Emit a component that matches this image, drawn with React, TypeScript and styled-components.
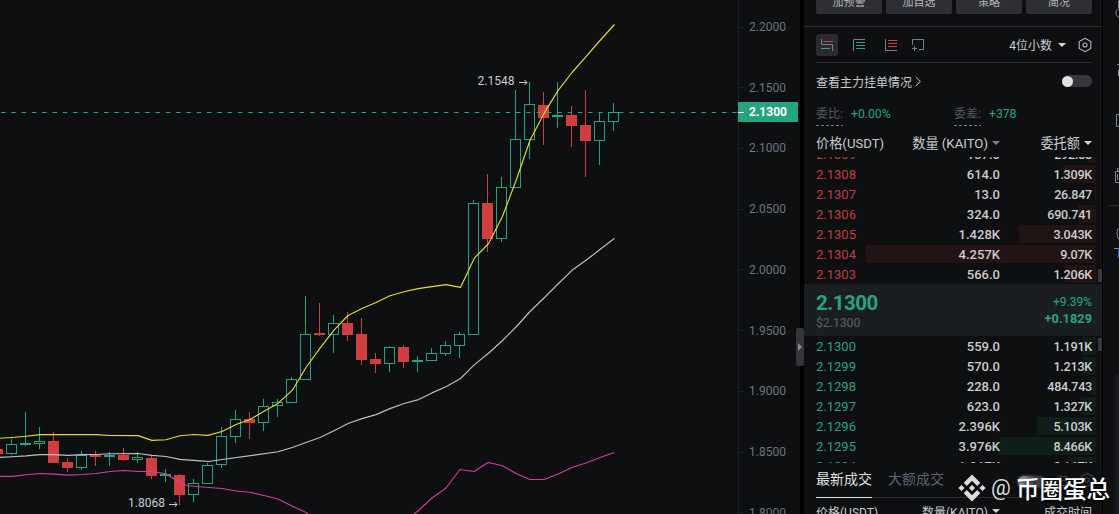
import React from "react";
import styled, { createGlobalStyle } from "styled-components";

const C = {
  bg: "#0d0f11",
  green: "#26a480",
  red: "#cf3f40",
  text: "#cbccd0",
  muted: "#70727f",
  faint: "#55575f",
  line: "#2c2d30",
  tile: "#2e2f34",
};

const Global = createGlobalStyle`
  * { box-sizing: border-box; }
  body {
    margin: 0;
    background: #000;
    overflow: hidden;
    font-family: Roboto, "Noto Sans CJK SC", sans-serif;
  }
`;

const Screen = styled.div`
  position: relative;
  display: flex;
  width: 1119px;
  height: 514px;
  overflow: hidden;
  background: #000;
  color: ${C.text};
`;

/* ---------- chart ---------- */

const ChartPane = styled.section`
  position: relative;
  display: flex;
  width: 800px;
  margin-right: 4px;
  background: ${C.bg};
`;

const Plot = styled.svg`
  display: block;
  width: 738px;
  height: 514px;
`;

const Axis = styled.div`
  width: 62px;
  height: 514px;
  overflow: hidden;
  border-left: 1px solid #1d1f22;
  padding-top: 17px;
`;

const Tick = styled.div`
  display: flex;
  align-items: center;
  gap: 5px;
  height: 20px;
  margin-bottom: 40.72px;
  font-size: 12px;
  color: ${C.muted};
  &::before {
    content: "";
    width: 5px;
    height: 1px;
    background: #1d1f22;
  }
`;

const PriceTag = styled.div`
  position: absolute;
  left: 738px;
  top: 102px;
  display: flex;
  align-items: center;
  gap: 5px;
  width: 60px;
  height: 20px;
  background: ${C.green};
  color: #fff;
  font-size: 12px;
  font-weight: 700;
  &::before {
    content: "";
    width: 6px;
    height: 1px;
    background: #fff;
  }
`;

const Handle = styled.div`
  position: absolute;
  left: 796px;
  top: 328px;
  display: flex;
  align-items: center;
  justify-content: center;
  width: 8px;
  height: 38px;
  border-radius: 2px;
  background: #34353b;
  &::before {
    content: "";
    border: 4px solid transparent;
    border-left-color: #8b8c96;
    border-right-width: 0;
  }
`;

type Candle = [up: number, high: number, low: number, top: number, bottom: number];

const FIRST_X = -3;
const STEP = 14;

const candles: Candle[] = [
  [0, 449, 454, 449, 454],
  [1, 439, 455, 444, 454],
  [1, 412, 446, 443, 445],
  [1, 427, 449, 441, 444],
  [0, 432, 463, 441, 463],
  [0, 458, 472, 462, 468],
  [1, 451, 470, 455, 468],
  [0, 451, 466, 455, 457],
  [1, 452, 466, 455, 457],
  [0, 448, 461, 455, 460],
  [1, 452, 463, 457, 460],
  [0, 455, 479, 458, 476],
  [1, 469, 482, 474, 476],
  [0, 474, 505, 475, 495],
  [1, 479, 502, 483, 495],
  [1, 463, 484, 465, 484],
  [1, 427, 468, 436, 465],
  [1, 410, 443, 419, 437],
  [0, 412, 439, 419, 423],
  [1, 399, 431, 406, 423],
  [1, 399, 417, 402, 406],
  [1, 377, 403, 379, 403],
  [1, 296, 380, 334, 380],
  [0, 303, 336, 333, 335],
  [1, 315, 353, 323, 335],
  [0, 312, 341, 323, 335],
  [0, 318, 365, 334, 360],
  [0, 353, 373, 359, 364],
  [1, 346, 372, 347, 364],
  [0, 345, 368, 347, 362],
  [1, 356, 372, 360, 362],
  [1, 348, 361, 353, 361],
  [1, 341, 356, 345, 354],
  [1, 332, 358, 334, 346],
  [1, 200, 335, 203, 335],
  [0, 174, 252, 203, 239],
  [1, 177, 242, 187, 239],
  [1, 90, 188, 139, 188],
  [1, 82, 159, 104, 140],
  [0, 92, 145, 105, 118],
  [1, 82, 128, 115, 117],
  [0, 106, 147, 115, 126],
  [0, 90, 177, 125, 141],
  [1, 113, 165, 121, 141],
  [1, 103, 131, 112, 122],
];

const upper =
  "0,438.3 12,437.5 26,436.3 40,434.6 96,434.6 110,435.5 138,435.6 152,440.4 166,439.8 180,435.8 194,434.5 208,435.4 222,431.5 236,424.5 250,419.5 264,411.2 278,403.4 292.4,390.2 306,367.5 320,348.2 334,330.2 348,315.5 362,308.5 376,302.5 390,295.8 404,291.8 418,288.6 432,286.6 446,284.6 460.5,287.4 474.3,258.2 488.6,243.5 502.3,216.8 516,180.8 530,140.2 544,113.4 558,90.6 572,72.5 586,56.6 600,40.5 614.5,24.5";
const middle =
  "0,457.4 12,456.8 26,455.9 40,454.6 54,454.6 68,455.4 82,454.6 96,454.5 110,453.8 138,453.5 152,455.4 166,456.5 180,459.4 200,460.9 209,461.5 222,459.5 278,451.8 293,447.2 306,442.5 320,437.5 334,430.8 348,423.5 362,418.6 376,414.6 390,408.6 404,403.5 418.6,399.6 432,392.9 446,386.8 460.5,378.5 474.5,364.6 488.5,353.3 502,341 516,327 530,311.5 544,298 558,284 572,270.3 586,260.3 600,249.5 614.5,238.3";
const lower =
  "0,476.4 13,476.4 26,474.8 40,473.5 54,474.1 68,475.1 82,474.5 96,473.5 110,471.5 124,470.5 138,471.5 152,471.5 166,473.8 173,478.3 180,483 188,485.8 200,486.8 222,488.5 236,491 250,492.3 264,495.5 278,499 292,506 306,512.5 312,517";
const lowerTail =
  "410,517 418,511 432,498 446,488 460,469.5 474,471.5 488,462.5 502,465.5 516,473.5 530,479.5 544,479.5 558,474 572,467.5 586,463 600,457.5 614.5,452.5";

function Bar({ index, data }: { index: number; data: Candle }) {
  const [up, high, low, top, bottom] = data;
  const x = FIRST_X + index * STEP;
  const color = up ? C.green : C.red;
  if (up && bottom - top > 2) {
    return (
      <g>
        <rect x={x} y={high} width={1} height={top - high} fill={color} />
        <rect x={x} y={bottom} width={1} height={low - bottom} fill={color} />
        <rect x={x - 4.5} y={top + 0.5} width={10} height={bottom - top - 1} fill={C.bg} stroke={color} />
      </g>
    );
  }
  return (
    <g fill={color}>
      <rect x={x} y={high} width={1} height={low - high} />
      <rect x={x - 5} y={top} width={11} height={bottom - top} />
    </g>
  );
}

function Chart() {
  return (
    <ChartPane>
      <Plot viewBox="0 0 738 514">
        {candles.map((c, i) => (
          <Bar key={i} index={i} data={c} />
        ))}
        <path d="M1 112.5H738" stroke={C.green} strokeDasharray="4.5 5.8" />
        <g fill="none" strokeWidth="1.15" strokeLinejoin="round">
          <polyline points={middle} stroke="#bfc0c2" />
          <polyline points={upper} stroke="#e6de2e" />
          <polyline points={lower} stroke="#d23ba6" />
          <polyline points={lowerTail} stroke="#d23ba6" />
        </g>
        <g fill={C.text} fontSize="12" fontFamily="Roboto, sans-serif">
          <text x="477.5" y="85">2.1548</text>
          <text x="128" y="507">1.8068</text>
        </g>
        <g stroke={C.text} fill="none">
          <path d="M519 82.5H527M524.5 80L527 82.5L524.5 85" />
          <path d="M169 504.5H177M174.5 502L177 504.5L174.5 507" />
        </g>
      </Plot>
      <Axis>
        {["2.2000", "2.1500", "2.1000", "2.0500", "2.0000", "1.9500", "1.9000", "1.8500", "1.8000"].map((v) => (
          <Tick key={v}>{v}</Tick>
        ))}
      </Axis>
      <PriceTag>2.1300</PriceTag>
      <Handle />
    </ChartPane>
  );
}

/* ---------- order book ---------- */

const Panel = styled.section`
  display: flex;
  flex-direction: column;
  width: 298px;
  height: 514px;
  overflow: hidden;
  background: ${C.bg};
  > * { flex: none; }
`;

const Actions = styled.div`
  display: flex;
  gap: 4px;
  height: 27px;
  padding: 0 10px 0 12px;
  border-bottom: 1px solid ${C.line};
`;

const Action = styled.div`
  display: flex;
  flex: 1;
  align-items: flex-end;
  justify-content: center;
  height: 14px;
  overflow: hidden;
  border-radius: 0 0 2px 2px;
  background: ${C.tile};
  color: #b5b7bd;
  font-size: 11px;
  line-height: 22px;
`;

const Toolbar = styled.div`
  display: flex;
  align-items: center;
  height: 36px;
  margin: 0 10px 0 12px;
  border-bottom: 1px solid ${C.line};
`;

const ModeButton = styled.div<{ $active?: boolean; $gap?: number }>`
  display: flex;
  align-items: center;
  justify-content: center;
  width: 22px;
  height: 22px;
  margin-right: ${(p) => p.$gap ?? 10}px;
  border-radius: 3px;
  background: ${(p) => (p.$active ? "#292b2e" : "transparent")};
`;

const Decimals = styled.div`
  display: flex;
  align-items: center;
  gap: 6px;
  margin: 0 12px 0 auto;
  font-size: 12px;
`;

const Caret = styled.i<{ $dim?: boolean }>`
  border: 4px solid transparent;
  border-top-color: ${(p) => (p.$dim ? "#80828b" : "#d4d5d8")};
  border-bottom-width: 0;
`;

const MainOrders = styled.div`
  display: flex;
  align-items: center;
  height: 36px;
  padding: 0 10px 0 12px;
  font-size: 12px;
  svg { margin-left: 3px; }
`;

const Switch = styled.div`
  display: flex;
  align-items: center;
  width: 30px;
  height: 12px;
  margin-left: auto;
  border-radius: 6px;
  background: #36373d;
  &::before {
    content: "";
    width: 11px;
    height: 11px;
    border-radius: 50%;
    background: #dfe0e2;
  }
`;

const Ratios = styled.div`
  display: grid;
  grid-template-columns: 138px 1fr;
  height: 31px;
  padding: 6px 12px 0;
  font-size: 12.2px;
`;

const Ratio = styled.div`
  display: flex;
  gap: 8px;
  height: 21px;
  line-height: 18px;
  color: ${C.green};
`;

const RatioName = styled.span`
  width: 27px;
  color: ${C.faint};
  font-size: 12px;
  background: repeating-linear-gradient(90deg, #777982 0 3px, transparent 3px 5px) 0 100% / 100% 1px no-repeat;
`;

const Header = styled.div<{ $small?: boolean }>`
  display: grid;
  grid-template-columns: 80px 104px 1fr;
  align-items: center;
  height: ${(p) => (p.$small ? 26 : 27)}px;
  padding: 0 10px ${(p) => (p.$small ? 0 : 2)}px 12px;
  font-size: ${(p) => (p.$small ? 12 : 13.2)}px;
`;

const HeaderCell = styled.span`
  display: flex;
  align-items: center;
  gap: 4px;
  white-space: nowrap;
  & + & { justify-content: flex-end; }
`;

const Book = styled.div<{ $height: number; $fromEnd?: boolean }>`
  display: flex;
  flex-direction: column;
  justify-content: ${(p) => (p.$fromEnd ? "flex-end" : "flex-start")};
  height: ${(p) => p.$height}px;
  overflow: hidden;
  position: relative;
`;

const Row = styled.div<{ $depth: number; $sell?: boolean }>`
  display: grid;
  flex: none;
  grid-template-columns: 80px 104px 92px;
  align-items: center;
  height: 20px;
  margin-right: 6px;
  padding: 1px 0 0 12px;
  font-size: 13px;
  font-weight: 500;
  text-align: right;
  background: linear-gradient(${(p) => (p.$sell ? "#221314, #221314" : "#101e1a, #101e1a")}) right 1px / ${(p) => p.$depth}px 18px no-repeat;
`;

const Price = styled.span<{ $sell?: boolean }>`
  color: ${(p) => (p.$sell ? "#c23b3c" : C.green)};
  font-weight: 400;
  text-align: left;
`;

const Total = styled.span`
  font-size: 12.6px;
  letter-spacing: -0.25px;
`;

const Thumb = styled.div<{ $top: number }>`
  position: absolute;
  right: 0;
  top: ${(p) => p.$top}px;
  width: 4px;
  height: 13px;
  background: #36373d;
`;

const Last = styled.div`
  display: flex;
  justify-content: space-between;
  height: 52px;
  padding: 8px 10px 0 12px;
  background: #1b1e20;
  color: ${C.green};
`;

const LastColumn = styled.div<{ $end?: boolean }>`
  display: flex;
  flex-direction: column;
  align-items: ${(p) => (p.$end ? "flex-end" : "flex-start")};
`;

const LastPrice = styled.b`
  font-size: 20.5px;
  letter-spacing: -0.5px;
  line-height: 23px;
`;

const Fiat = styled.span`
  color: #5c5e66;
  font-size: 12.2px;
  line-height: 16px;
`;

const Percent = styled.span`
  font-size: 12px;
  line-height: 20px;
`;

const Change = styled.b`
  font-size: 12.8px;
  line-height: 14px;
`;

const Tabs = styled.div`
  display: flex;
  gap: 16px;
  height: 35px;
  margin: 0 10px 0 12px;
  border-bottom: 1px solid ${C.line};
`;

const Tab = styled.div<{ $active?: boolean }>`
  height: 35px;
  border-bottom: 1px solid ${(p) => (p.$active ? "#e4e5e7" : "transparent")};
  color: ${(p) => (p.$active ? "#e0e1e3" : "#5f6270")};
  font-size: 14px;
  line-height: 33px;
`;

const TabTools = styled.div`
  display: flex;
  align-items: center;
  gap: 12px;
  height: 34px;
  margin: 0 -2px 0 auto;
  color: #55575f;
  font-size: 12px;
`;

type Level = [price: string, amount: string, total: string, depth: number];

const asks: Level[] = [
  ["2.1309", "137.0", "292.88", 8],
  ["2.1308", "614.0", "1.309K", 33],
  ["2.1307", "13.0", "26.847", 1],
  ["2.1306", "324.0", "690.741", 18],
  ["2.1305", "1.428K", "3.043K", 77],
  ["2.1304", "4.257K", "9.07K", 230],
  ["2.1303", "566.0", "1.206K", 31],
];

const bids: Level[] = [
  ["2.1300", "559.0", "1.191K", 13],
  ["2.1299", "570.0", "1.213K", 14],
  ["2.1298", "228.0", "484.743", 5],
  ["2.1297", "623.0", "1.327K", 15],
  ["2.1296", "2.396K", "5.103K", 59],
  ["2.1295", "3.976K", "8.466K", 97],
  ["2.1294", "1.017K", "2.167K", 25],
];

function Levels({ rows, sell }: { rows: Level[]; sell?: boolean }) {
  return (
    <>
      {rows.map(([price, amount, total, depth]) => (
        <Row key={price} $depth={depth} $sell={sell}>
          <Price $sell={sell}>{price}</Price>
          <span>{amount}</span>
          <Total>{total}</Total>
        </Row>
      ))}
    </>
  );
}

function Hexagon({ color }: { color: string }) {
  return (
    <svg width="14" height="16" viewBox="0 0 14 16" fill="none" stroke={color} strokeWidth="1.1">
      <path d="M7 1.3L12.8 4.6V11.4L7 14.7L1.2 11.4V4.6Z" />
      <circle cx="7" cy="8" r="2" />
    </svg>
  );
}

const frame = "#7b7d88";

function OrderBook() {
  return (
    <Panel>
      <Actions>
        <Action>加预警</Action>
        <Action>加自选</Action>
        <Action>策略</Action>
        <Action>简况</Action>
      </Actions>
      <Toolbar>
        <ModeButton $active>
          <svg width="12" height="12" fill="none">
            <path d="M0.5 0V5.5H11.5V12" stroke={frame} />
            <path d="M2 2.5H12" stroke={C.red} />
            <path d="M0 9.5H9" stroke={C.green} />
          </svg>
        </ModeButton>
        <ModeButton>
          <svg width="12" height="12" fill="none">
            <path d="M12 0.5H0.5V12" stroke={frame} />
            <path d="M3 3.5H12M3 6.5H12M3 9.5H12" stroke={C.green} />
          </svg>
        </ModeButton>
        <ModeButton $gap={5}>
          <svg width="12" height="12" fill="none">
            <path d="M0.5 0V11.5H12" stroke={frame} />
            <path d="M3 1.5H12M3 4.5H12M3 7.5H12" stroke={C.red} />
          </svg>
        </ModeButton>
        <ModeButton>
          <svg width="12" height="12" fill="none" stroke={frame}>
            <path d="M0.5 6V0.5H11.5V10.5H7M0 9.5H5M2.5 7V12" />
          </svg>
        </ModeButton>
        <Decimals>
          4位小数
          <Caret />
        </Decimals>
        <Hexagon color="#b8bac0" />
      </Toolbar>
      <MainOrders>
        查看主力挂单情况
        <svg width="6" height="11" fill="none" stroke={C.text}>
          <path d="M0.7 1L5.3 5.5L0.7 10" />
        </svg>
        <Switch />
      </MainOrders>
      <Ratios>
        <Ratio>
          <RatioName>委比:</RatioName>+0.00%
        </Ratio>
        <Ratio>
          <RatioName>委差:</RatioName>+378
        </Ratio>
      </Ratios>
      <Header>
        <HeaderCell>价格(USDT)</HeaderCell>
        <HeaderCell>
          数量 (KAITO)
          <Caret $dim />
        </HeaderCell>
        <HeaderCell>
          委托额
          <Caret />
        </HeaderCell>
      </Header>
      <Book $height={127} $fromEnd>
        <Levels rows={asks} sell />
        <Thumb $top={112} />
      </Book>
      <Last>
        <LastColumn>
          <LastPrice>2.1300</LastPrice>
          <Fiat>$2.1300</Fiat>
        </LastColumn>
        <LastColumn $end>
          <Percent>+9.39%</Percent>
          <Change>+0.1829</Change>
        </LastColumn>
      </Last>
      <Book $height={127}>
        <Levels rows={bids} />
        <Thumb $top={2} />
      </Book>
      <Tabs>
        <Tab $active>最新成交</Tab>
        <Tab>大额成交</Tab>
        <TabTools>
          归
          <Hexagon color="#45474d" />
        </TabTools>
      </Tabs>
      <Header $small>
        <HeaderCell>价格(USDT)</HeaderCell>
        <HeaderCell>
          数量(KAITO)
          <Caret />
        </HeaderCell>
        <HeaderCell>成交时间</HeaderCell>
      </Header>
    </Panel>
  );
}

/* ---------- right rail ---------- */

const Rail = styled.aside`
  width: 16px;
  height: 514px;
  margin-left: 1px;
  overflow: hidden;
  background: ${C.bg};
`;

function SideRail() {
  return (
    <Rail>
      <svg width="16" height="514" fill="none" stroke="#85878f">
        <path d="M15.5 1V8M16 9C12 9 12 17 16 17" />
        <path d="M14 64.5H16M15.5 70V76" />
        <path d="M16 114.5H13.5V126.5H16" />
        <path d="M16 168.5H14.5V171.5M16 171.5H12.5V182.5H16M14.5 174V180" />
        <path d="M6 205.5H16" stroke={C.line} />
        <path d="M16 228C13.5 229 13.5 238 16 239" />
        <path d="M11 248.5H16" />
        <path d="M15.5 248V258" stroke="#2f65b0" />
        <path d="M12 514V380Q12 374 16 373V514Z" fill="#17191c" stroke="none" />
      </svg>
    </Rail>
  );
}

/* ---------- watermark ---------- */

const Watermark = styled.div`
  position: absolute;
  left: 958px;
  top: 473px;
  display: flex;
  align-items: center;
  height: 30px;
  color: #fff;
  font-size: 23.5px;
  font-weight: 500;
  white-space: nowrap;
  text-shadow: 0 1px 3px #000;
`;

const At = styled.span`
  width: 20px;
  margin: -2px 5px 0 5px;
  color: #dcdcdc;
  font-family: Roboto, sans-serif;
  font-size: 22px;
  font-weight: 400;
`;

const Smudge = styled.div`
  position: absolute;
  left: 1018px;
  top: 476px;
  width: 28px;
  height: 12px;
  border-radius: 6px;
  background: linear-gradient(90deg, #d5d7da, #45474d 60%);
  filter: blur(1px);
`;

export default function App() {
  return (
    <Screen>
      <Global />
      <Chart />
      <OrderBook />
      <SideRail />
      <Smudge />
      <Watermark>
        <svg width="28" height="28" viewBox="0 0 28 28" fill="#dcdcdc">
          <path d="M14 0.5L22.3 8.8L19.2 11.9L14 6.7L8.8 11.9L5.7 8.8Z" />
          <path d="M14 27.5L5.7 19.2L8.8 16.1L14 21.3L19.2 16.1L22.3 19.2Z" />
          <path d="M3.5 10.9L6.6 14L3.5 17.1L0.4 14Z" />
          <path d="M24.5 10.9L27.6 14L24.5 17.1L21.4 14Z" />
          <path d="M14 10.9L17.1 14L14 17.1L10.9 14Z" />
        </svg>
        <At>@</At>
        币圈蛋总
      </Watermark>
    </Screen>
  );
}
